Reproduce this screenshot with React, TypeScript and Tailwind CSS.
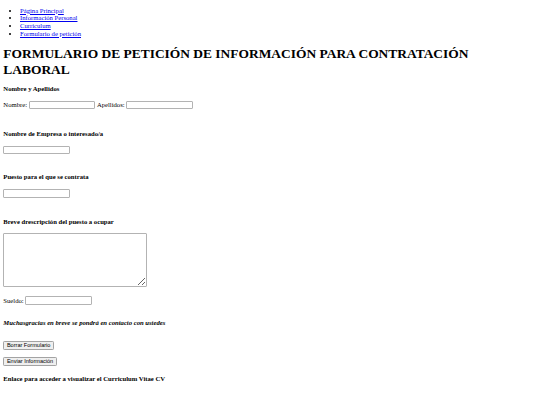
import React from "react";

const links = [
  "Página Principal",
  "Información Personal",
  "Curriculum",
  "Formulario de petición",
];

const Field: React.FC<{ className?: string }> = ({ className = "" }) => (
  <input
    type="text"
    className={`block h-[8.5px] w-[66.5px] rounded-[1px] border border-[#b3b3b3] bg-white ${className}`}
  />
);

const Heading: React.FC<{ className?: string; children: React.ReactNode }> = ({
  className = "",
  children,
}) => <h4 className={`text-[6.67px] font-bold leading-[7.67px] ${className}`}>{children}</h4>;

const btn =
  "h-[9px] rounded-[1.25px] border border-[#a3a3a3] bg-[#efefef] px-[2.6px] font-['Liberation_Sans',sans-serif] text-[5.55px] leading-[7px] text-black";

const App: React.FC = () => {
  return (
    <div className="flex min-h-screen flex-col bg-white px-[3.33px] pt-[6.67px] font-['Liberation_Serif',serif] text-black">
      {/* nav */}
      <ul className="list-disc pl-[16.67px] text-[6.67px] leading-[7.67px]">
        {links.map((l) => (
          <li key={l}>
            <a href="#" className="text-[#0000ee] underline">
              {l}
            </a>
          </li>
        ))}
      </ul>

      <h1 className="mt-[8.87px] text-[13.45px] font-bold leading-[15.33px]">
        FORMULARIO DE PETICIÓN DE INFORMACIÓN PARA CONTRATACIÓN
        <br />
        LABORAL
      </h1>

      <form className="flex flex-col">
        <Heading className="mt-[8.6px]">Nombre y Apellidos</Heading>
        <div className="mt-[7.6px] flex h-[8.5px] items-center text-[6.67px] leading-[7.67px]">
          <span className="mr-[1.7px]">Nombre:</span>
          <Field />
          <span className="mx-[1.7px]">Apellidos:</span>
          <Field />
        </div>

        <Heading className="mt-[20.9px]">Nombre de Empresa o interesado/a</Heading>
        <Field className="mt-[7.86px]" />

        <Heading className="mt-[19.26px]">Puesto para el que se contrata</Heading>
        <Field className="mt-[8.16px]" />

        <Heading className="mt-[20.06px]">Breve drescripción del puesto a ocupar</Heading>
        <textarea className="mt-[7.96px] block h-[53.5px] w-[144px] resize rounded-[1px] border border-[#b3b3b3] bg-white" />

        <div className="mt-[9.5px] flex h-[8.5px] items-center text-[6.67px] leading-[7.67px]">
          <span className="mr-[1.7px]">Sueldo:</span>
          <Field />
        </div>

        <Heading className="mt-[13.86px] italic">
          Muchasgracias en breve se pondrá en contacto con ustedes
        </Heading>

        <div className="mt-[14.96px] flex">
          <button type="reset" className={btn}>
            Borrar Formulario
          </button>
        </div>
        <div className="mt-[7px] flex">
          <button type="button" className={btn}>
            Enviar Información
          </button>
        </div>
      </form>

      <Heading className="mt-[8.7px]">
        Enlace para acceder a visualizar el Curriculum Vitae CV
      </Heading>
    </div>
  );
};

export default App;
